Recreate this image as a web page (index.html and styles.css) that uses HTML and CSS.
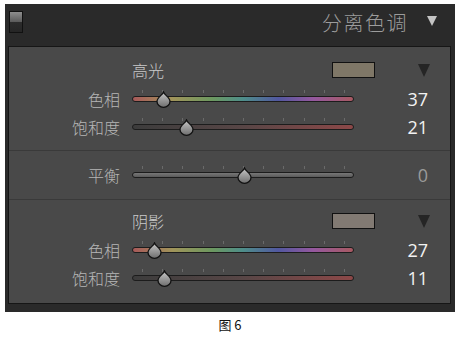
FILE: index.html
```html
<!DOCTYPE html>
<html lang="zh-CN">
<head>
    <meta charset="UTF-8">
    <title>分离色调</title>
    <link rel="stylesheet" href="styles.css">
</head>
<body>
    <div class="frame">
        <div class="header">
            <span class="toggle"></span>
            <span class="title">分离色调</span>
            <span class="caret-light"></span>
        </div>

        <div class="panel">
            <div class="section sec-high">
                <div class="group-head">
                    <span class="group-name">高光</span>
                    <span class="swatch swatch-high"></span>
                    <span class="caret-dark"></span>
                </div>
                <div class="row">
                    <span class="label">色相</span>
                    <div class="track hue"><span class="thumb" style="left: 30px"></span></div>
                    <span class="value">37</span>
                </div>
                <div class="row">
                    <span class="label">饱和度</span>
                    <div class="track sat"><span class="thumb" style="left: 53px"></span></div>
                    <span class="value">21</span>
                </div>
            </div>

            <div class="section sec-balance">
                <div class="row">
                    <span class="label">平衡</span>
                    <div class="track bal"><span class="thumb" style="left: 111px"></span></div>
                    <span class="value dim">0</span>
                </div>
            </div>

            <div class="section sec-shadow">
                <div class="group-head">
                    <span class="group-name">阴影</span>
                    <span class="swatch swatch-shadow"></span>
                    <span class="caret-dark"></span>
                </div>
                <div class="row">
                    <span class="label">色相</span>
                    <div class="track hue"><span class="thumb" style="left: 21px"></span></div>
                    <span class="value">27</span>
                </div>
                <div class="row">
                    <span class="label">饱和度</span>
                    <div class="track sat"><span class="thumb" style="left: 31px"></span></div>
                    <span class="value">11</span>
                </div>
            </div>
        </div>
    </div>

    <p class="caption">图 6</p>
</body>
</html>
```

FILE: styles.css
```css
body {
    margin: 0;
    padding: 4px 0 0 5px;
    background: #fff;
    font-family: "Noto Sans CJK SC", "Noto Sans", sans-serif;
}
.frame {
    width: 450px;
    box-sizing: border-box;
    padding: 0 4px 8px 3px;
    background: #2a2a2a;
}
.header {
    height: 42px;
    display: flex;
    align-items: center;
    padding: 0 14px 0 1px;
}
.toggle {
    width: 14px;
    height: 22px;
    box-sizing: border-box;
    border: 1px solid #111;
    background: linear-gradient(#8e8e8e, #5a5a5a 50%, #2c2c2c 50%, #262626);
    margin-top: -6px;
}
.title {
    margin-left: auto;
    font-size: 20px;
    letter-spacing: 1.5px;
    color: #9c9c9c;
    font-weight: 300;
    line-height: 1;
    margin-top: -4px;
}
.caret-light {
    margin-left: 19px;
    width: 0;
    height: 0;
    border-left: 5px solid transparent;
    border-right: 5px solid transparent;
    border-top: 10px solid #c4c4c4;
    margin-top: -8px;
}
.panel {
    background: #494949;
    border: 1px solid #161616;
}
.section {
    padding: 10px 0 9px;
}
.sec-balance,
.sec-shadow {
    border-top: 1px solid #3a3a3a;
}
.sec-balance {
    padding: 10px 0;
}
.sec-shadow {
    padding: 8px 0 11px;
}
.group-head {
    height: 26px;
    display: flex;
    align-items: center;
    padding: 0 20px 0 123px;
    margin-bottom: 2px;
}
.group-name {
    font-size: 16px;
    font-weight: 300;
    color: #c9c9c9;
    line-height: 1;
    flex: 1;
}
.swatch {
    width: 43px;
    height: 16px;
    box-sizing: border-box;
    border: 1px solid #111;
}
.swatch-high {
    background: #7f7767;
}
.swatch-shadow {
    background: #827a73;
}
.caret-dark {
    margin-left: 43px;
    width: 0;
    height: 0;
    border-left: 6px solid transparent;
    border-right: 6px solid transparent;
    border-top: 13px solid #252525;
}
.row {
    height: 28px;
    display: grid;
    grid-template-columns: 111px 222px 1fr;
    column-gap: 12px;
    align-items: center;
}
.label {
    text-align: right;
    font-size: 16px;
    font-weight: 300;
    color: #b6b6b6;
    line-height: 1;
}
.value {
    text-align: right;
    padding-right: 22px;
    font-family: "Open Sans", "Noto Sans", sans-serif;
    font-size: 18px;
    color: #f2f2f2;
    line-height: 1;
}
.value.dim {
    color: #9a9a9a;
}
.track {
    position: relative;
    height: 6px;
    box-sizing: border-box;
    border: 1px solid #1c1c1c;
    border-radius: 3px;
}
.track::before {
    content: "";
    position: absolute;
    left: 9px;
    top: -7px;
    width: 204px;
    height: 3px;
    background: repeating-linear-gradient(to right, #6a6a6a 0 1px, transparent 1px 20.2px);
}
.hue {
    background: linear-gradient(to right, #a85a5a, #a0945a 18%, #6c9860 36%, #4e8e8a 50%, #5258a0 66%, #95589e 82%, #a85a62);
}
.sat {
    background: linear-gradient(to right, #3c3c3c, #584646 50%, #8c4848);
}
.bal {
    background: linear-gradient(#777, #5a5a5a);
}
.thumb {
    position: absolute;
    top: -6px;
    width: 15px;
    height: 17px;
    margin-left: -7.5px;
    background: url("data:image/svg+xml,%3Csvg xmlns='http://www.w3.org/2000/svg' viewBox='0 0 15 17'%3E%3ClinearGradient id='g' x1='0' y1='0' x2='0' y2='1'%3E%3Cstop offset='0' stop-color='%23c8c8c8'/%3E%3Cstop offset='1' stop-color='%236e6e6e'/%3E%3C/linearGradient%3E%3Cpath d='M7.5 1C8.5 4 14 6.5 14 10.5A6.5 5.8 0 0 1 1 10.5C1 6.5 6.5 4 7.5 1Z' fill='url(%23g)' stroke='%23111' stroke-width='1.3'/%3E%3C/svg%3E") no-repeat;
}
.caption {
    margin: 4px 0 0;
    width: 450px;
    text-align: center;
    font-size: 13px;
    color: #111;
    line-height: 18px;
}
```
